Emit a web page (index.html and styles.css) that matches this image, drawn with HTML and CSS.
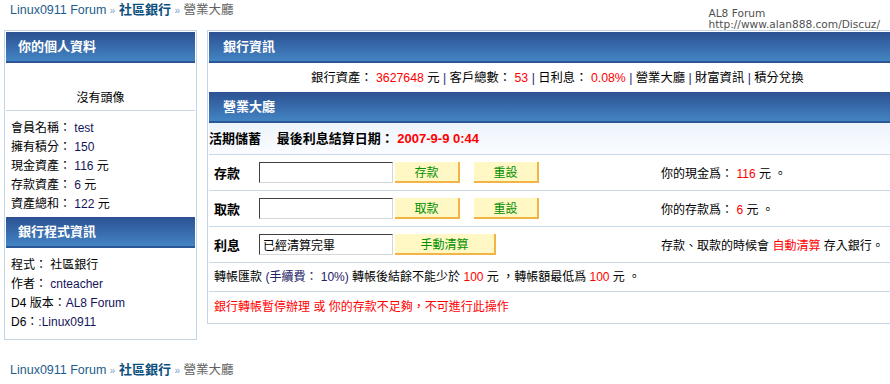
FILE: index.html
```html
<!DOCTYPE html>
<html lang="zh-Hant">
<head>
    <meta charset="UTF-8">
    <title>社區銀行 - 營業大廳</title>
    <link rel="stylesheet" href="styles.css">
</head>
<body>
    <div class="topbar">
        <div class="crumb">
            <a class="forum" href="#">Linux0911 Forum</a> <span class="sep">»</span>
            <a class="bank" href="#">社區銀行</a> <span class="sep">»</span>
            <span class="here">營業大廳</span>
        </div>
        <div class="logo">
            <div>AL8 Forum</div>
            <div>http://www.alan888.com/Discuz/</div>
        </div>
    </div>

    <div class="wrap">
        <!-- 左側資料 -->
        <div class="side">
            <div class="head">你的個人資料</div>
            <div class="avatar">沒有頭像</div>
            <ul class="info-list">
                <li>會員名稱： <span class="val">test</span></li>
                <li>擁有積分： <span class="val">150</span></li>
                <li>現金資產： <span class="val">116</span> 元</li>
                <li>存款資產： <span class="val">6</span> 元</li>
                <li>資產總和： <span class="val">122</span> 元</li>
            </ul>
            <div class="head">銀行程式資訊</div>
            <ul class="info-list prog">
                <li>程式： 社區銀行</li>
                <li>作者： <span class="val">cnteacher</span></li>
                <li>D4 版本：<span class="val">AL8 Forum</span></li>
                <li>D6：<span class="val">:Linux0911</span></li>
            </ul>
        </div>

        <!-- 主要內容 -->
        <div class="main">
            <div class="head">銀行資訊</div>
            <div class="bank-info">
                銀行資產： <span class="red">3627648</span> 元 <span class="bar">|</span>
                客戶總數： <span class="red">53</span> <span class="bar">|</span>
                日利息： <span class="red">0.08%</span> <span class="bar">|</span>
                營業大廳 <span class="bar">|</span> 財富資訊 <span class="bar">|</span> 積分兌換
            </div>
            <div class="head">營業大廳</div>
            <div class="title-row">
                <span>活期儲蓄</span>
                <span class="last">最後利息結算日期： <span class="red">2007-9-9 0:44</span></span>
            </div>

            <div class="op-row">
                <span class="label">存款</span>
                <input class="field" type="text">
                <button class="btn">存款</button>
                <button class="btn">重設</button>
                <span class="note">你的現金爲： <span class="red">116</span> 元 。</span>
            </div>
            <div class="op-row">
                <span class="label">取款</span>
                <input class="field" type="text">
                <button class="btn">取款</button>
                <button class="btn">重設</button>
                <span class="note">你的存款爲： <span class="red">6</span> 元 。</span>
            </div>
            <div class="op-row">
                <span class="label">利息</span>
                <input class="field" type="text" value="已經清算完畢">
                <button class="btn wide">手動清算</button>
                <span class="note">存款、取款的時候會 <span class="red">自動清算</span> 存入銀行。</span>
            </div>
            <div class="text-row">
                轉帳匯款 <span class="fee">(手續費： 10%)</span> 轉帳後結餘不能少於 <span class="red">100</span> 元 ，轉帳額最低爲 <span class="red">100</span> 元 。
            </div>
            <div class="text-row warn">銀行轉帳暫停辦理 或 你的存款不足夠，不可進行此操作</div>
        </div>
    </div>

    <div class="crumb bottom">
        <a class="forum" href="#">Linux0911 Forum</a> <span class="sep">»</span>
        <a class="bank" href="#">社區銀行</a> <span class="sep">»</span>
        <span class="here">營業大廳</span>
    </div>
</body>
</html>
```

FILE: styles.css
```css
/* 全體 */
html, body {
    overflow: hidden;
}

body {
    margin: 0;
    font-family: "Liberation Sans", Arial, "Noto Sans CJK TC", sans-serif;
    font-size: 12px;
    color: #000;
    background: #fff;
}

a {
    text-decoration: none;
}

.red {
    color: #ff0000;
}

/* 頂部導航 */
.topbar {
    display: flex;
    justify-content: space-between;
    height: 30px;
}

.crumb {
    padding-left: 10px;
    line-height: 20px;
    font-size: 12.5px;
}

.crumb .forum {
    color: #1d5d8c;
}

.crumb .bank {
    color: #0d4f7c;
    font-weight: bold;
    font-size: 13px;
}

.crumb .sep {
    color: #7f9fc6;
    font-size: 10px;
}

.crumb .here {
    color: #606060;
}

.crumb.bottom {
    margin-top: 20px;
}

.logo {
    margin-right: 10px;
    padding-top: 8px;
    font-family: "DejaVu Sans", sans-serif;
    font-size: 10.6px;
    line-height: 11px;
    color: #505050;
}

/* 版面 */
.wrap {
    display: flex;
    align-items: flex-start;
    gap: 10px;
    padding-left: 4px;
    width: 900px;
}

.head {
    height: 29px;
    line-height: 29px;
    padding-left: 14px;
    background: linear-gradient(to bottom, #2c5192, #4384c3);
    border-bottom: 2px solid #2b5797;
    color: #fff;
    font-weight: bold;
    font-size: 13px;
}

/* 左側 */
.side {
    width: 191px;
    border: 1px solid #c3d6e9;
    padding: 1px;
}

.side .head {
    padding-left: 12px;
}

.avatar {
    padding: 26px 0 2px;
    line-height: 19px;
    text-align: center;
    border-bottom: 1px solid #c8d9ea;
}

.info-list {
    list-style: none;
    margin: 0;
    padding: 8px 0 3px 5px;
}

.info-list li {
    line-height: 19px;
}

.info-list.prog {
    padding: 8px 0 6px 5px;
}

.val {
    color: #14145a;
}

/* 主要內容 */
.main {
    width: 700px;
    border: 1px solid #c3d6e9;
    padding: 1px;
}

.bank-info {
    height: 27px;
    line-height: 27px;
    padding-top: 2px;
    padding-left: 102px;
    font-size: 12.3px;
}

.bar {
    color: #2a2a6e;
}

.title-row {
    height: 31px;
    line-height: 32px;
    background: linear-gradient(to bottom, #eef4fc, #fafcff);
    border-bottom: 1px solid #c8d9ea;
    font-weight: bold;
    font-size: 13px;
}

.title-row .last {
    margin-left: 12px;
}

.op-row {
    display: grid;
    grid-template-columns: 45px 136px 79px 187px 1fr;
    align-items: center;
    height: 35px;
    padding-left: 5px;
    border-bottom: 1px solid #c8d9ea;
}

.op-row:first-of-type {
    height: 36px;
}

.label {
    font-weight: bold;
    font-size: 13px;
}

.field {
    box-sizing: border-box;
    width: 134px;
    height: 21px;
    margin: 0;
    padding: 1px 3px;
    border: 1px solid #d6d6d6;
    border-top-color: #404040;
    border-left-color: #404040;
    font-family: inherit;
    font-size: 12px;
    background: #fff;
}

.btn {
    box-sizing: border-box;
    width: 65px;
    height: 21px;
    padding: 0;
    background: #fff7c4;
    border: 0;
    border-right: 2px solid #f3b446;
    border-bottom: 2px solid #f3b446;
    color: #009000;
    font-family: inherit;
    font-size: 12px;
    cursor: pointer;
}

.btn.wide {
    width: 101px;
    grid-column: span 2;
}

.note {
    white-space: nowrap;
}

.text-row {
    height: 28px;
    line-height: 29px;
    padding-left: 5px;
    border-bottom: 1px solid #c8d9ea;
}

.fee {
    color: #222266;
}

.text-row.warn {
    height: 30px;
    line-height: 30px;
    border-bottom: 0;
    color: #ff0000;
}
```
